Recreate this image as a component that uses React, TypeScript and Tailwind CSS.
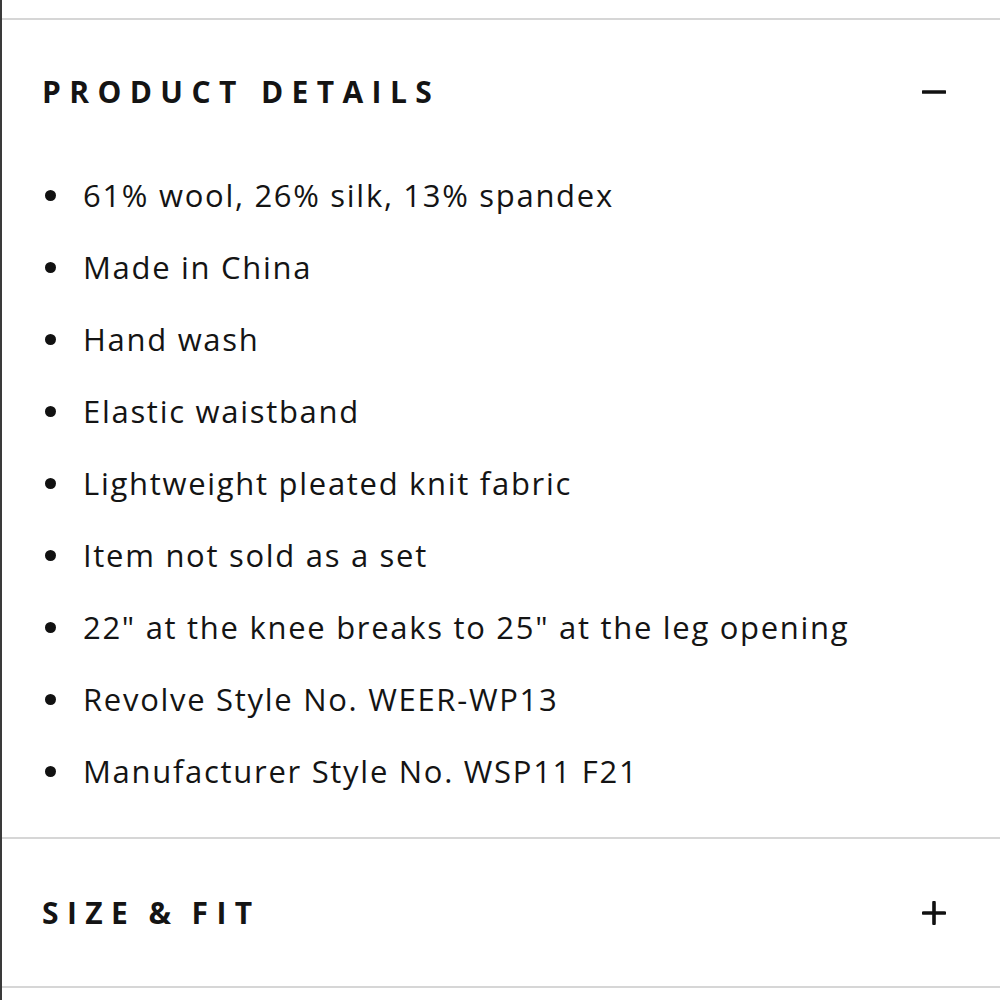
import React from 'react';

const items = [
  '61% wool, 26% silk, 13% spandex',
  'Made in China',
  'Hand wash',
  'Elastic waistband',
  'Lightweight pleated knit fabric',
  'Item not sold as a set',
  '22" at the knee breaks to 25" at the leg opening',
  'Revolve Style No. WEER-WP13',
  'Manufacturer Style No. WSP11 F21',
];

function Minus() {
  return (
    <svg viewBox="0 0 24 24" className="h-6 w-6" aria-hidden>
      <path d="M1 12h22" stroke="#111" strokeWidth={3.6} strokeLinecap="round" />
    </svg>
  );
}

function Plus() {
  return (
    <svg viewBox="0 0 24 24" className="h-6 w-6" aria-hidden>
      <path d="M1.5 12h21M12 1.5v21" stroke="#111" strokeWidth={3.6} strokeLinecap="round" />
    </svg>
  );
}

export default function App() {
  return (
    <div className="h-[1000px] w-[1000px] overflow-hidden border-l-2 border-[#3a3a3a] bg-white font-['Open_Sans','Liberation_Sans',sans-serif] text-[#141414]">
      <div className="h-[18px]" />
      <section className="border-t-2 border-[#d6d6d6]">
        <div className="flex h-[139px] items-center justify-between pl-[40px] pr-[54px] pt-[4px]">
          <h2 className="text-[30px] font-bold leading-none tracking-[0.28em]">PRODUCT DETAILS</h2>
          <Minus />
        </div>
        <ul className="pb-[30px]">
          {items.map((t) => (
            <li key={t} className="flex h-[72px] items-center">
              <span className="ml-[43px] mr-[27px] h-[11px] w-[11px] shrink-0 rounded-full bg-[#111]" />
              <span className="text-[31px] leading-none tracking-[0.055em]">{t}</span>
            </li>
          ))}
        </ul>
      </section>
      <section className="border-y-2 border-[#d6d6d6]">
        <div className="flex h-[147px] items-center justify-between pl-[40px] pr-[54px]">
          <h2 className="text-[30px] font-bold leading-none tracking-[0.28em] [word-spacing:-4px]">SIZE &amp; FIT</h2>
          <Plus />
        </div>
      </section>
    </div>
  );
}
